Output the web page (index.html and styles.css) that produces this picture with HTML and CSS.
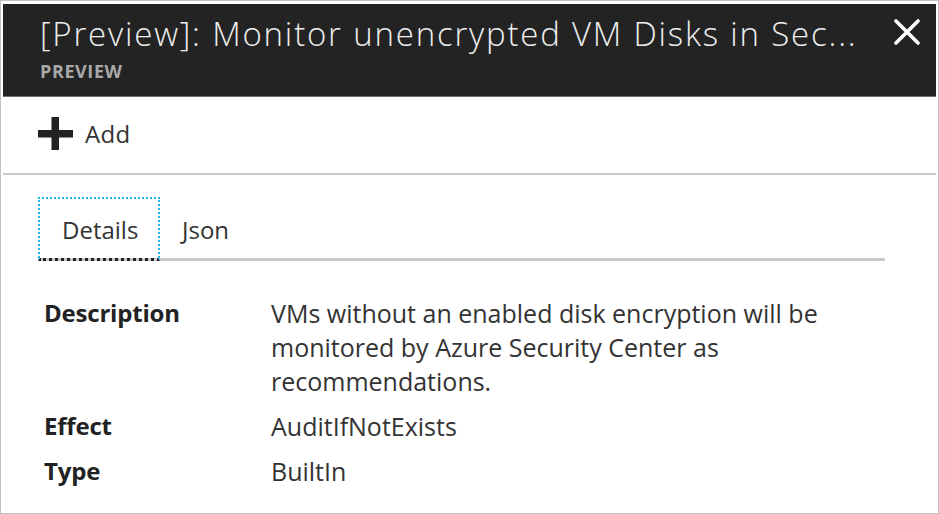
FILE: index.html
```html
<!DOCTYPE html>
<html>
<head>
<meta charset="utf-8">
<link rel="stylesheet" href="styles.css">
</head>
<body>
<div class="frame">
  <div class="blade">
    <header class="header">
      <div class="titles">
        <div class="title">[Preview]: Monitor unencrypted VM Disks in Sec...</div>
        <div class="subtitle">PREVIEW</div>
      </div>
      <svg class="close" width="26" height="26" viewBox="0 0 26 26">
        <path d="M2 2 L24 24 M24 2 L2 24" stroke="#ffffff" stroke-width="3.6" stroke-linecap="round"/>
      </svg>
    </header>
    <div class="toolbar">
      <div class="cmd">
        <svg class="plus" width="35" height="33" viewBox="0 0 35 33">
          <rect x="0" y="13" width="35" height="7.5" fill="#222"/>
          <rect x="13.5" y="0" width="7.5" height="33" fill="#222"/>
        </svg>
        <span class="cmd-label">Add</span>
      </div>
    </div>
    <div class="content">
      <div class="tabs">
        <div class="tab active">Details</div>
        <div class="tab">Json</div>
      </div>
      <div class="props">
        <div class="label">Description</div>
        <div class="value">VMs without an enabled disk encryption will be monitored by Azure Security Center as recommendations.</div>
        <div class="label">Effect</div>
        <div class="value">AuditIfNotExists</div>
        <div class="label">Type</div>
        <div class="value">BuiltIn</div>
      </div>
    </div>
  </div>
</div>
</body>
</html>
```

FILE: styles.css
```css
html, body {
  margin: 0;
  padding: 0;
  background: #ffffff;
}

.frame {
  width: 939px;
  height: 514px;
  box-sizing: border-box;
  border: 1px solid #c3c3c3;
  padding: 3px 2px 0 2px;
  overflow: hidden;
  font-family: "Open Sans", "Noto Sans", sans-serif;
}

.blade {
  display: flex;
  flex-direction: column;
}

.header {
  height: 93px;
  background: #232323;
  border-bottom: 1px solid #6a6a6a;
  display: flex;
  justify-content: space-between;
  align-items: flex-start;
  padding-left: 37px;
  padding-right: 16px;
  box-sizing: border-box;
}

.titles {
  display: flex;
  flex-direction: column;
}

.title {
  color: #eeeeee;
  font-weight: 300;
  font-size: 33px;
  line-height: 40px;
  margin-top: 10px;
  white-space: nowrap;
  letter-spacing: 1.8px;
}

.subtitle {
  color: #a8a8a8;
  font-weight: 700;
  font-size: 18px;
  line-height: 22px;
  margin-top: 6px;
  letter-spacing: 0.6px;
}

.close {
  margin-top: 15px;
}

.toolbar {
  height: 78px;
  border-bottom: 2px solid #c9c9c9;
  box-sizing: border-box;
  display: flex;
  align-items: center;
  padding-left: 35px;
}

.cmd {
  display: flex;
  align-items: center;
  gap: 12px;
  margin-top: -3px;
}

.cmd-label {
  color: #333333;
  font-size: 24px;
  line-height: 30px;
  letter-spacing: 0.3px;
}

.content {
  padding: 22px 51px 0 35px;
}

.tabs {
  display: flex;
  border-bottom: 3px solid #c8c8c8;
  height: 64px;
  box-sizing: border-box;
}

.tab {
  color: #333333;
  font-size: 24px;
  line-height: 30px;
  padding: 18px 22px 0 22px;
  box-sizing: border-box;
  height: 64px;
}

.tab.active {
  width: 122px;
  padding-left: 22px;
  border: 2px dotted #1ab7ea;
  border-bottom: 3px dotted #222;
  padding-top: 16px;
}

.props {
  display: grid;
  grid-template-columns: 227px 590px;
  row-gap: 11px;
  margin-top: 35px;
  padding-left: 6px;
}

.label {
  color: #222222;
  font-weight: 700;
  font-size: 24px;
  line-height: 34px;
  letter-spacing: -0.2px;
}

.value {
  color: #333333;
  font-size: 25px;
  line-height: 34px;
}
```
